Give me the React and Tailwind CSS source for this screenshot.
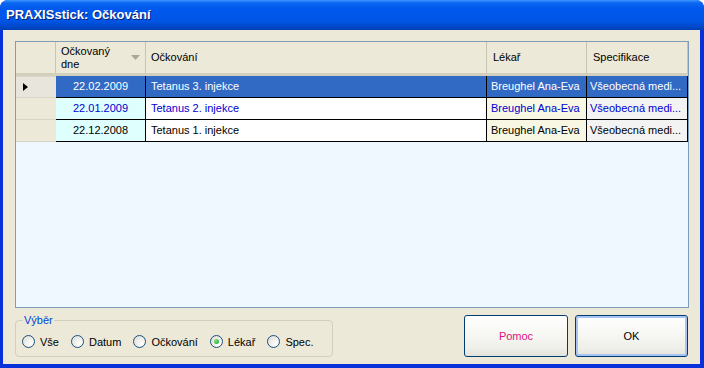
import React from "react";

const rows = [
  { date: "22.02.2009", name: "Tetanus 3. injekce", doc: "Breughel Ana-Eva", spec: "Všeobecná medi...", state: "sel" },
  { date: "22.01.2009", name: "Tetanus 2. injekce", doc: "Breughel Ana-Eva", spec: "Všeobecná medi...", state: "blue" },
  { date: "22.12.2008", name: "Tetanus 1. injekce", doc: "Breughel Ana-Eva", spec: "Všeobecná medi...", state: "plain" },
];

function Radio({ label, checked }) {
  return (
    <label className="flex items-center gap-[5px] mr-[12px]">
      <span className="w-[13px] h-[13px] rounded-full border border-[#1c5180] bg-[radial-gradient(circle_at_70%_70%,#ffffff,#dcd9cf)] flex items-center justify-center">
        {checked && <span className="w-[5px] h-[5px] rounded-full bg-[radial-gradient(circle_at_35%_35%,#7be37b,#21a121)]" />}
      </span>
      <span>{label}</span>
    </label>
  );
}

function Row({ r }) {
  const sel = r.state === "sel";
  const txt = sel ? "text-white" : r.state === "blue" ? "text-[#0000d0]" : "text-black";
  const cell = "h-full flex items-center border-r border-b border-black overflow-hidden whitespace-nowrap";
  return (
    <div className={`flex h-[22px] ${txt}`}>
      <div className={`w-[40px] h-full flex items-center ${sel ? "bg-[#e8e6dc] border-y border-[#d8d5c6]" : "bg-[#ece9d8] border-b border-[#d8d5c6]"}`}>
        {sel && (
          <svg width="8" height="10" viewBox="0 0 8 10" className="ml-[6px]">
            <path d="M1 1 L6 5 L1 9 Z" fill="#000" />
          </svg>
        )}
      </div>
      <div className={`${cell} w-[90px] justify-center ${sel ? "bg-[#316ac5]" : "bg-[#dfffff]"}`}>{r.date}</div>
      <div className={`${cell} w-[341px] pl-[5px] ${sel ? "bg-[#316ac5]" : "bg-white"}`}>{r.name}</div>
      <div className={`${cell} w-[100px] pl-[4px] ${sel ? "bg-[#316ac5]" : "bg-[#f7f7e4]"}`}>{r.doc}</div>
      <div className={`${cell} w-[101px] pl-[3px] ${sel ? "bg-[#316ac5]" : "bg-[#f3f3f3]"}`}>{r.spec}</div>
    </div>
  );
}

export default function App() {
  return (
    <div className="w-[704px] h-[368px] flex flex-col bg-[#0831d9] rounded-t-[8px] overflow-hidden text-[11px] font-['Liberation_Sans',Arial,sans-serif]">
      <div className="h-[30px] shrink-0 flex items-center pl-[6px] bg-[linear-gradient(180deg,#3d95ff_0%,#0a66f0_10%,#0058ee_30%,#0055e5_70%,#0047c8_90%,#003fb0_100%)]">
        <span className="text-white font-bold text-[13px] [text-shadow:1px_1px_0_#0a1f6e]">PRAXISstick: Očkování</span>
      </div>
      <div className="flex-1 bg-[#ece9d8] ml-[3px] mr-[4px] mb-[4px] flex flex-col pl-[12px] pr-[11px] pt-[11px]">
        <div className="h-[267px] border border-[#7f9db9] bg-[#f0f8ff] flex flex-col">
          <div className="h-[34px] flex bg-[#ece9d8] text-black border-b-[3px] border-[#d3cfbd]">
            <div className="w-[40px] border-r border-[#c7c5b2]" />
            <div className="w-[90px] flex items-center justify-between pl-[5px] pr-[4px] border-r border-[#c7c5b2] leading-[13px]">
              <span>Očkovaný<br />dne</span>
              <svg width="10" height="6" viewBox="0 0 10 6"><path d="M0 0 H9 L4.5 5 Z" fill="#aca899" /></svg>
            </div>
            <div className="w-[341px] flex items-center pl-[5px] border-r border-[#c7c5b2]">Očkování</div>
            <div className="w-[100px] flex items-center pl-[6px] border-r border-[#c7c5b2]">Lékař</div>
            <div className="w-[101px] flex items-center pl-[6px] border-r border-[#c7c5b2]">Specifikace</div>
          </div>
          {rows.map((r) => <Row key={r.date} r={r} />)}
        </div>
        <div className="flex mt-[4px]">
          <fieldset className="w-[316px] h-[45px] border border-[#d0d0bf] rounded-[4px] px-[6px] pb-[4px] m-0">
            <legend className="text-[#0046d5] px-[1px] ml-[1px]">Výběr</legend>
            <div className="flex items-center text-black mt-[5px]">
              <Radio label="Vše" />
              <Radio label="Datum" />
              <Radio label="Očkování" />
              <Radio label="Lékař" checked />
              <Radio label="Spec." />
            </div>
          </fieldset>
          <div className="flex-1" />
          <button className="w-[104px] h-[42px] mt-[3px] rounded-[3px] border border-[#003c74] bg-[linear-gradient(180deg,#ffffff,#f0f0ea_80%,#e3e2da)] text-[#e0127f]">Pomoc</button>
          <button className="w-[113px] h-[42px] mt-[3px] ml-[7px] mr-[1px] rounded-[3px] border border-[#003c74] bg-[linear-gradient(180deg,#ffffff,#f0f0ea_80%,#e3e2da)] text-black shadow-[inset_0_0_0_2px_#a9c4f0]">OK</button>
        </div>
      </div>
    </div>
  );
}
